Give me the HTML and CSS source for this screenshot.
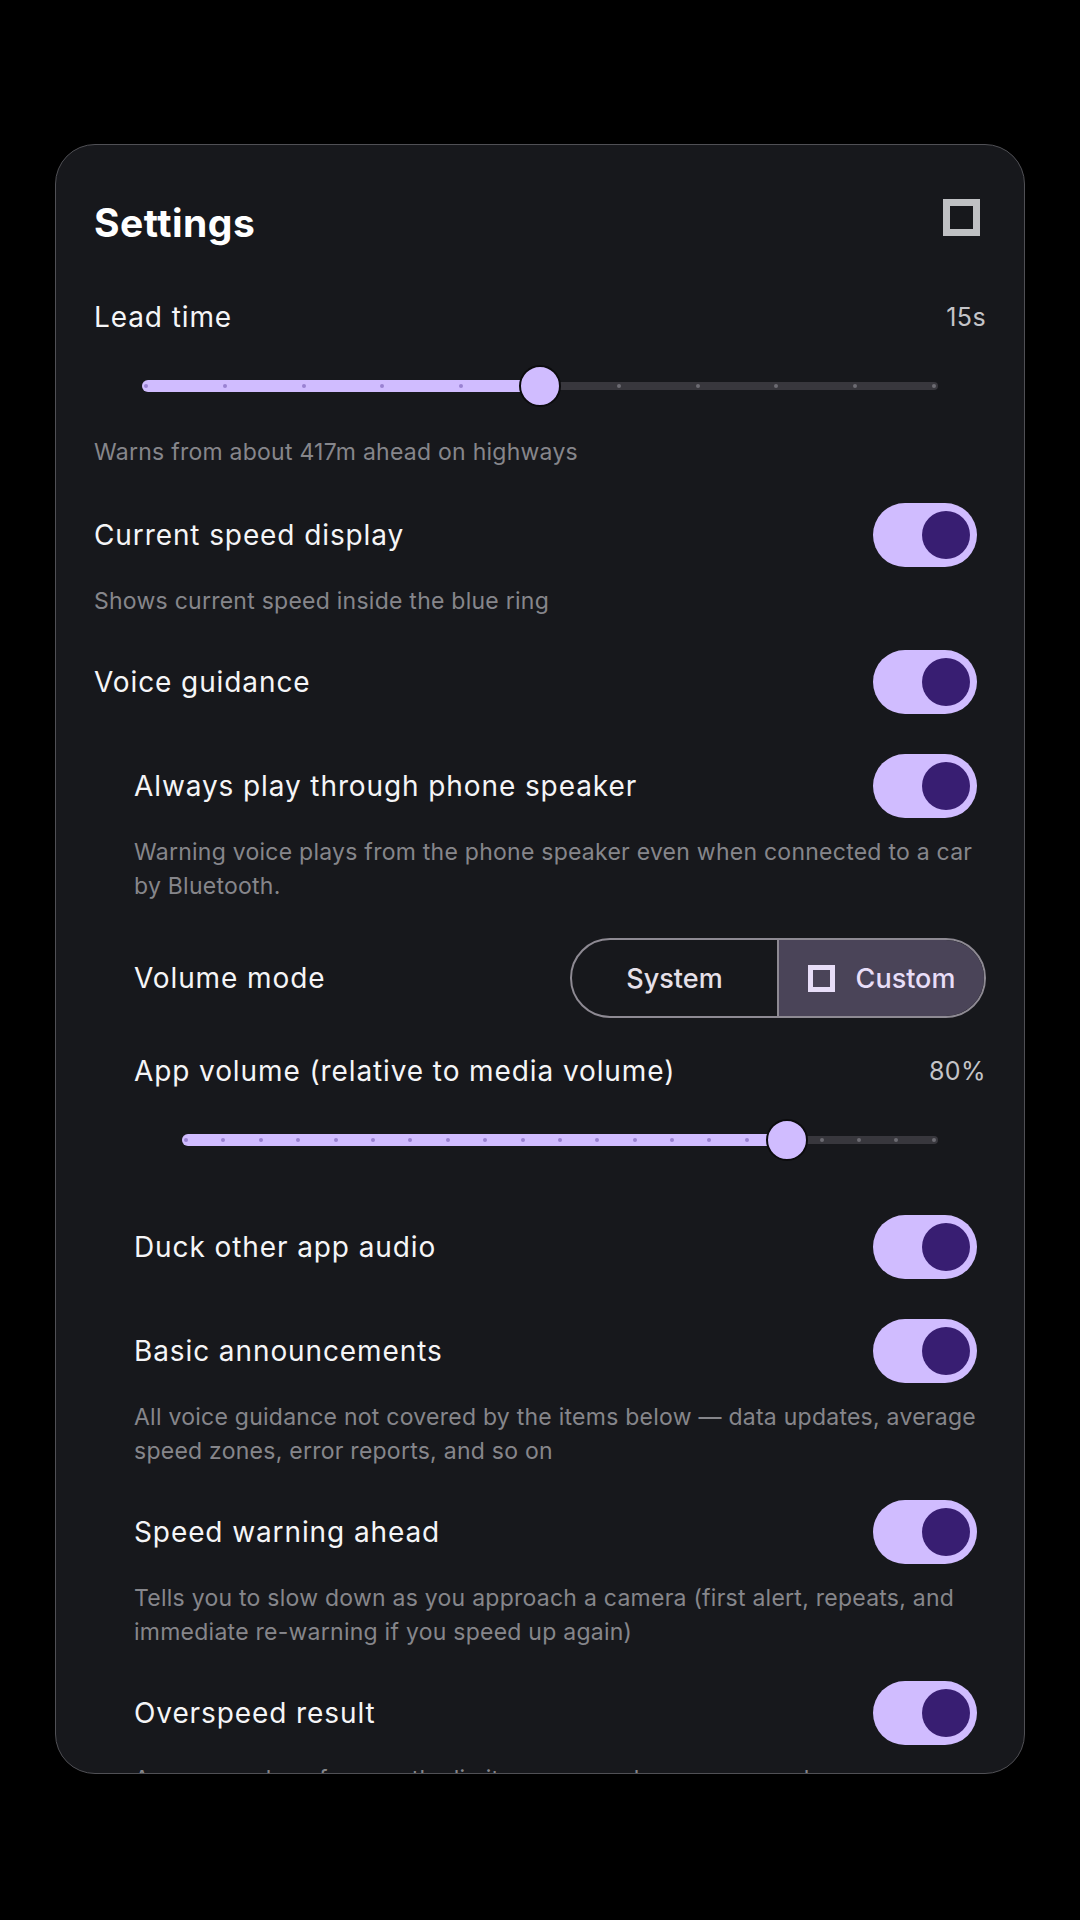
FILE: index.html
```html
<!DOCTYPE html>
<html lang="en">
<head>
  <meta charset="UTF-8">
  <meta name="viewport" content="width=device-width, initial-scale=1.0">
  <title>Settings</title>
  <link rel="stylesheet" href="styles.css">
</head>
<body>
  <div class="card">
    <div class="card-head">
      <h1>Settings</h1>
      <span class="icon-box"></span>
    </div>

    <!-- Lead time -->
    <div class="slider-item">
      <div class="value-row">
        <span class="label">Lead time</span>
        <span class="value">15s</span>
      </div>
      <div class="slider">
        <div class="track-bg"></div>
        <div class="track-fill" style="width: 50%"></div>
        <div class="dots">
          <i class="on"></i><i class="on"></i><i class="on"></i><i class="on"></i><i class="on"></i><i class="on"></i>
          <i></i><i></i><i></i><i></i><i></i>
        </div>
        <div class="thumb" style="left: 50%"></div>
      </div>
    </div>
    <p class="desc">Warns from about 417m ahead on highways</p>

    <div class="toggle-row">
      <span class="label">Current speed display</span>
      <span class="switch"><span class="knob"></span></span>
    </div>
    <p class="desc">Shows current speed inside the blue ring</p>

    <div class="toggle-row">
      <span class="label">Voice guidance</span>
      <span class="switch"><span class="knob"></span></span>
    </div>

    <!-- Voice sub-settings -->
    <div class="sub">
      <div class="toggle-row">
        <span class="label">Always play through phone speaker</span>
        <span class="switch"><span class="knob"></span></span>
      </div>
      <p class="desc">Warning voice plays from the phone speaker even when connected to a car by Bluetooth.</p>

      <div class="mode-row">
        <span class="label">Volume mode</span>
        <div class="segmented">
          <span class="seg">System</span>
          <span class="seg active"><span class="seg-icon"></span>Custom</span>
        </div>
      </div>

      <div class="slider-item">
        <div class="value-row">
          <span class="label">App volume (relative to media volume)</span>
          <span class="value">80%</span>
        </div>
        <div class="slider">
          <div class="track-bg"></div>
          <div class="track-fill" style="width: 80%"></div>
          <div class="dots">
            <i class="on"></i><i class="on"></i><i class="on"></i><i class="on"></i><i class="on"></i><i class="on"></i><i class="on"></i>
            <i class="on"></i><i class="on"></i><i class="on"></i><i class="on"></i><i class="on"></i><i class="on"></i><i class="on"></i>
            <i class="on"></i><i class="on"></i><i class="on"></i>
            <i></i><i></i><i></i><i></i>
          </div>
          <div class="thumb" style="left: 80%"></div>
        </div>
      </div>

      <div class="toggle-row">
        <span class="label">Duck other app audio</span>
        <span class="switch"><span class="knob"></span></span>
      </div>

      <div class="toggle-row">
        <span class="label">Basic announcements</span>
        <span class="switch"><span class="knob"></span></span>
      </div>
      <p class="desc">All voice guidance not covered by the items below — data updates, average speed zones, error reports, and so on</p>

      <div class="toggle-row">
        <span class="label">Speed warning ahead</span>
        <span class="switch"><span class="knob"></span></span>
      </div>
      <p class="desc">Tells you to slow down as you approach a camera (first alert, repeats, and immediate re-warning if you speed up again)</p>

      <div class="toggle-row">
        <span class="label">Overspeed result</span>
        <span class="switch"><span class="knob"></span></span>
      </div>
      <p class="desc">Announces how far over the limit you were when you passed<br>the camera</p>
    </div>
  </div>
</body>
</html>
```

FILE: styles.css
```css
* {
  box-sizing: border-box;
}
body {
  margin: 0;
  background-color: #000;
  font-family: Inter, "Noto Sans", sans-serif;
  color: #f5f5f7;
}
.card {
  width: 970px;
  height: 1630px;
  margin: 144px 0 0 55px;
  padding: 32px 38px 0;
  background-color: #17181c;
  border: 1px solid #505055;
  border-radius: 40px;
  overflow: hidden;
}
.card-head {
  height: 90px;
  margin-bottom: 20px;
  display: flex;
  justify-content: space-between;
  align-items: center;
}
.card-head h1 {
  margin: 0;
  font-size: 39px;
  font-weight: 700;
  letter-spacing: 0.5px;
  color: #fff;
}
.icon-box {
  width: 37px;
  height: 37px;
  margin: 0 6px 10px 0;
  border: 7px solid #bfc0c3;
}
.label {
  font-size: 28px;
  line-height: 34px;
  letter-spacing: 0.9px;
}
.value {
  font-size: 25px;
  letter-spacing: 0.4px;
  color: #c4c4c8;
}
.desc {
  margin: -3px 0 12px;
  font-size: 23px;
  line-height: 34px;
  letter-spacing: 0.25px;
  color: #86868b;
}
.slider-item + .desc {
  margin: -6px 0 14px;
}
.sub {
  padding-left: 40px;
}

/* toggles */
.toggle-row {
  height: 104px;
  display: flex;
  justify-content: space-between;
  align-items: center;
}
.switch {
  width: 104px;
  height: 64px;
  margin-right: 9px;
  padding: 0 7px;
  display: flex;
  justify-content: flex-end;
  align-items: center;
  background-color: #d0bcff;
  border-radius: 32px;
}
.knob {
  width: 48px;
  height: 48px;
  border-radius: 50%;
  background-color: #381e72;
}

/* sliders */
.slider-item {
  padding: 8px 0;
}
.value-row {
  height: 44px;
  display: flex;
  justify-content: space-between;
  align-items: center;
}
.slider {
  position: relative;
  height: 94px;
  margin: 0 48px;
}
.track-bg {
  position: absolute;
  left: 0;
  right: 0;
  top: 43px;
  height: 8px;
  border-radius: 4px;
  background-color: #38373d;
}
.track-fill {
  position: absolute;
  left: 0;
  top: 41px;
  height: 12px;
  border-radius: 6px;
  background-color: #d0bcff;
}
.dots {
  position: absolute;
  left: 2px;
  right: 2px;
  top: 45px;
  display: flex;
  justify-content: space-between;
}
.dots i {
  width: 4px;
  height: 4px;
  border-radius: 50%;
  background-color: #6c6b72;
}
.dots i.on {
  background-color: #9a82d2;
}
.thumb {
  position: absolute;
  top: 26px;
  width: 42px;
  height: 42px;
  margin-left: -21px;
  border-radius: 50%;
  border: 2px solid #0b0b0d;
  background-color: #d0bcff;
}

/* segmented button */
.mode-row {
  height: 126px;
  display: flex;
  justify-content: space-between;
  align-items: center;
}
.segmented {
  width: 416px;
  height: 80px;
  display: flex;
  border: 2px solid #8e8a93;
  border-radius: 40px;
  overflow: hidden;
}
.seg {
  flex: 1;
  display: flex;
  justify-content: center;
  align-items: center;
  gap: 21px;
  font-size: 27px;
  font-weight: 500;
  color: #e6e0e9;
}
.seg.active {
  border-left: 2px solid #8e8a93;
  background-color: #4a4458;
  color: #e8def8;
}
.seg-icon {
  width: 27px;
  height: 27px;
  border: 5px solid #e8def8;
}
```
